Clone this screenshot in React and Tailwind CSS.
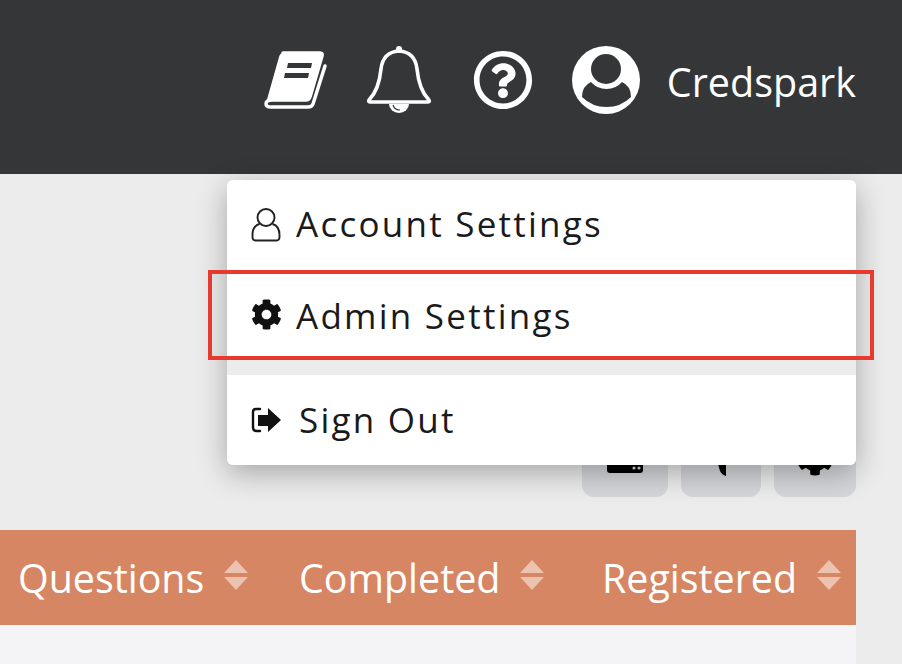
import { FaCog, FaRegQuestionCircle } from "react-icons/fa";

function BookIcon() {
  return (
    <svg width="66" height="64" viewBox="0 0 66 64" className="shrink-0">
      <path
        d="M20 3H57Q60 3 59 6L47 47Q46 50 43 50H9Q3 50 3 54Q3 57 8 57H45Q49 57 50 54L62 16"
        fill="none"
        stroke="#fff"
        strokeWidth="3.5"
        strokeLinecap="round"
        strokeLinejoin="round"
      />
      <path d="M20 3H57Q60 3 59 6L47 47Q46 50 43 50H9Q5 50 3 53L16 7Q17 3 20 3Z" fill="#fff" />
      <path d="M25 13H49L48 18H24ZM22 23H46L45 28H21Z" fill="#353638" />
    </svg>
  );
}

function BellIcon() {
  return (
    <svg width="66" height="70" viewBox="0 0 66 70" className="shrink-0">
      <path
        d="M3 55Q13 45 15 24Q17 7 33 6Q49 7 51 24Q53 45 63 55Q64 57 62 57H4Q2 57 3 55Z"
        fill="none"
        stroke="#fff"
        strokeWidth="3.6"
        strokeLinejoin="round"
      />
      <circle cx="33" cy="4" r="3" fill="#fff" />
      <path d="M23 59A10 9 0 0 0 43 59Z" fill="#fff" />
      <path d="M27 60A7 7 0 0 0 34 65" fill="none" stroke="#353638" strokeWidth="1.2" />
    </svg>
  );
}

function AvatarIcon() {
  return (
    <svg width="68" height="68" viewBox="0 0 68 68" className="shrink-0">
      <circle cx="34" cy="34" r="34" fill="#fff" />
      <circle cx="34" cy="23" r="15" fill="#353638" />
      <path
        d="M10 51Q10 40 19 36Q25 43 34.5 43Q44 43 50 36Q59 40 59 51Q49 61 34.5 61Q20 61 10 51Z"
        fill="#353638"
      />
    </svg>
  );
}

function OutlineUserIcon() {
  return (
    <svg width="30" height="36" viewBox="0 0 30 36" className="shrink-0">
      <circle cx="15" cy="10.5" r="8.5" fill="none" stroke="#222" strokeWidth="1.9" />
      <path
        d="M8.5 17Q1.5 19 1.5 28V30Q1.5 33.5 5 33.5H25Q28.5 33.5 28.5 30V28Q28.5 19 21.5 17"
        fill="none"
        stroke="#222"
        strokeWidth="1.9"
      />
    </svg>
  );
}

function SignOutIcon() {
  return (
    <svg width="32" height="28" viewBox="0 0 32 28" className="shrink-0">
      <path
        d="M10 3H6Q3 3 3 6V21Q3 25 6 25H10"
        fill="none"
        stroke="#111"
        strokeWidth="2.4"
        strokeLinecap="round"
      />
      <path d="M8 9H18V2L31 14L18 26V20H8Z" fill="#111" />
    </svg>
  );
}

function DriveIcon() {
  return (
    <svg width="36" height="36" viewBox="0 0 36 36">
      <path d="M2 0H34Q36 0 36 2V33Q36 36 33 36H3Q0 36 0 33V2Q0 0 2 0Z" fill="#000" />
      <circle cx="27" cy="31" r="1.6" fill="#d6d7db" />
      <circle cx="32" cy="31" r="1.6" fill="#d6d7db" />
    </svg>
  );
}

function SortCaret() {
  return (
    <svg width="24" height="30" viewBox="0 0 24 30" className="shrink-0 ml-[20px] -mt-[7px]">
      <path d="M12 0L24 13H0ZM0 17H24L12 30Z" fill="#ecc3b1" />
    </svg>
  );
}

function MenuItem({ icon, label, gap, height, textClass }) {
  return (
    <div className={`${height} flex items-center pl-[23px] bg-white`}>
      <span className="w-[32px] flex justify-center text-[#111]">{icon}</span>
      <span className={`${gap} ${textClass} text-[35px] tracking-[2.25px] text-[#1a1a1a] whitespace-nowrap`}>{label}</span>
    </div>
  );
}

export default function App() {
  return (
    <div className="w-[902px] h-[664px] overflow-hidden flex flex-col bg-[#ececed] font-['Open_Sans',sans-serif]">
      {/* Top bar */}
      <header className="h-[174px] shrink-0 bg-[#353638] flex items-center justify-end pr-[46px] pb-[14px]">
        <div className="mt-[3px] mr-[-1px]"><BookIcon /></div>
        <div className="ml-[38px]"><BellIcon /></div>
        <FaRegQuestionCircle className="ml-[41px] text-white" size={60} />
        <div className="ml-[39px]"><AvatarIcon /></div>
        <span className="ml-[27px] mt-[5px] text-[39.5px] text-white whitespace-nowrap">Credspark</span>
      </header>

      <main className="relative flex-1 flex flex-col">
        {/* Toolbar buttons, mostly behind the menu */}
        <div className="pt-[263px] pr-[46px] flex justify-end">
          <div className="w-[86px] h-[60px] rounded-xl bg-[#d6d7db] flex justify-center">
            <DriveIcon />
          </div>
          <div className="ml-[13px] w-[80px] h-[60px] rounded-xl bg-[#d6d7db] flex justify-center">
            <svg width="10" height="60" viewBox="0 0 10 60">
              <path d="M0 20H10V39Q6 38 4 34Z" fill="#000" />
            </svg>
          </div>
          <div className="ml-[13px] w-[82px] h-[60px] rounded-xl bg-[#d6d7db] flex items-center justify-center text-black">
            <FaCog size={38} className="-mt-[21px]" />
          </div>
        </div>

        {/* Table */}
        <div className="mt-[33px] mr-[46px] flex-1 flex flex-col bg-[#f4f4f7]">
          <div className="h-[95px] shrink-0 bg-[#d78663] flex items-center pl-[18px] text-[39.4px] text-white">
            <div className="w-[281px] flex items-center pt-[2px]"><span>Questions</span><SortCaret /></div>
            <div className="w-[303px] flex items-center pt-[2px]"><span>Completed</span><SortCaret /></div>
            <div className="flex items-center pt-[2px]"><span>Registered</span><SortCaret /></div>
          </div>
        </div>

        {/* Account dropdown */}
        <div className="absolute top-[6px] right-[46px] w-[629px] h-[285px] rounded-md overflow-hidden bg-[#ececec] shadow-[0_8px_30px_rgba(0,0,0,0.3)]">
          <MenuItem icon={<OutlineUserIcon />} label="Account Settings" gap="ml-[14px]" height="h-[90px]" textClass="-mt-[2px]" />
          <MenuItem icon={<FaCog size={31} />} label="Admin Settings" gap="ml-[14px]" height="h-[88px]" textClass="mt-[5px]" />
          <div className="h-[17px]" />
          <MenuItem icon={<SignOutIcon />} label="Sign Out" gap="ml-[17px]" height="h-[90px]" textClass="mt-[1px]" />
        </div>

        {/* Red annotation box */}
        <div className="absolute top-[96px] left-[208px] w-[666px] h-[90px] border-[4px] border-[#e8392e]" />
      </main>
    </div>
  );
}
